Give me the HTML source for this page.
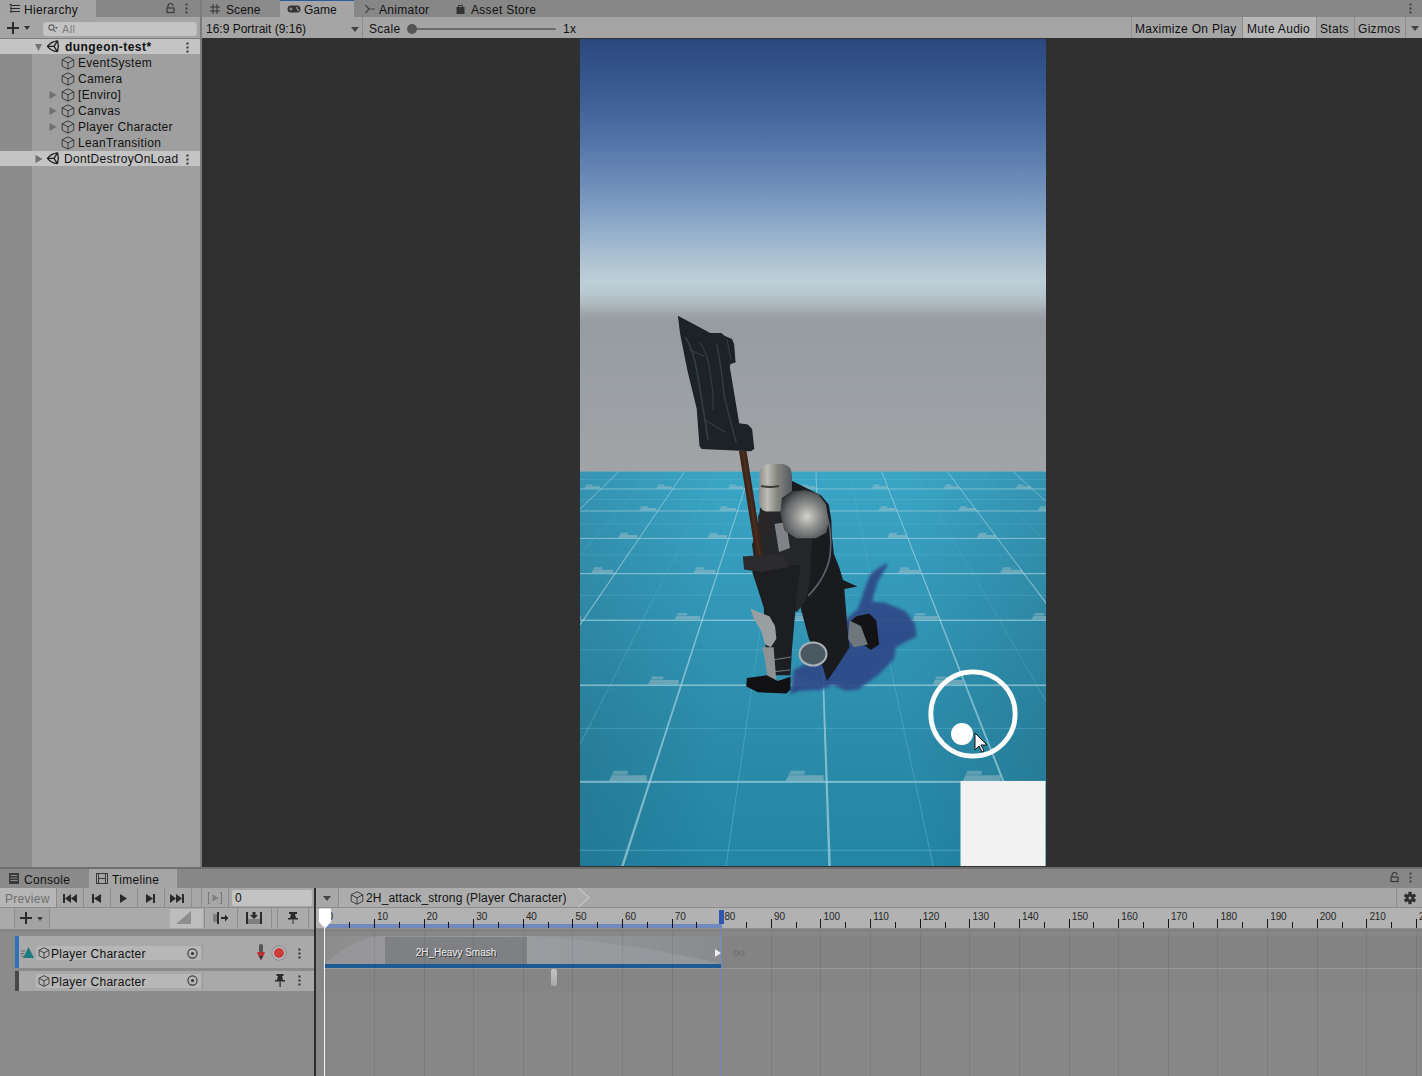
<!DOCTYPE html>
<html><head><meta charset="utf-8">
<style>
*{box-sizing:border-box;margin:0;padding:0}
html,body{width:1422px;height:1076px;overflow:hidden;background:#303030}
body{position:relative;font-family:"Liberation Sans",sans-serif;font-size:12px;color:#111}
.a{position:absolute}
.t{position:absolute;white-space:nowrap;line-height:14px;letter-spacing:0.3px}
svg.a{overflow:visible}
</style></head><body>

<!-- ============ HIERARCHY ============ -->
<div class="a" style="left:0;top:0;width:200px;height:17px;background:#878787"></div>
<div class="a" style="left:0;top:0;width:96px;height:17px;background:#a4a4a4"></div>
<svg class="a" style="left:9px;top:4px" width="11" height="9" viewBox="0 0 11 9"><g stroke="#2a2a2a" stroke-width="1" fill="none"><path d="M0.5 0.5h2M2 0v9M3 1.5h8M3 4.5h8M3 7.5h8M1.5 4.5h1.5M1.5 7.5h1.5"/></g></svg>
<div class="t" style="left:24px;top:3px">Hierarchy</div>
<svg class="a" style="left:166px;top:3px" width="9" height="10" viewBox="0 0 9 10"><g fill="none" stroke="#3a3a3a" stroke-width="1.2"><path d="M2 5V3a2.5 2.5 0 0 1 5 0"/><rect x="1" y="5" width="7" height="4.5"/></g></svg>
<svg class="a" style="left:185px;top:3px" width="3" height="11" viewBox="0 0 3 11"><g fill="#404040"><rect x="0.5" y="0.5" width="2" height="2"/><rect x="0.5" y="4.5" width="2" height="2"/><rect x="0.5" y="8.5" width="2" height="2"/></g></svg>

<div class="a" style="left:0;top:17px;width:200px;height:22px;background:#a5a5a5;border-bottom:1px solid #7e7e7e"></div>
<svg class="a" style="left:7px;top:22px" width="12" height="12" viewBox="0 0 12 12"><path d="M6 0v12M0 6h12" stroke="#2b2b2b" stroke-width="2"/></svg>
<svg class="a" style="left:24px;top:26px" width="6" height="4" viewBox="0 0 6 4"><path d="M0 0h6L3 4z" fill="#333"/></svg>
<div class="a" style="left:43px;top:20.5px;width:154px;height:15px;background:#c4c4c4;border-radius:3px;box-shadow:inset 0 1px 1px rgba(0,0,0,0.18)"></div>
<svg class="a" style="left:48px;top:24px" width="10" height="9" viewBox="0 0 10 9"><g fill="none" stroke="#5a5a5a" stroke-width="1.1"><circle cx="3.5" cy="3.5" r="2.6"/><path d="M5.4 5.4L7.5 8"/></g><path d="M7 3h3L8.5 5z" fill="#5a5a5a"/></svg>
<div class="t" style="left:62px;top:22px;color:#7c7c7c;font-size:11px">All</div>

<div class="a" style="left:0;top:39px;width:200px;height:828px;background:#9f9f9f"></div>
<div class="a" style="left:0;top:39px;width:32px;height:828px;background:#8c8c8c"></div>
<div class="a" style="left:0;top:39px;width:200px;height:15px;background:#c4c4c4"></div>
<div class="a" style="left:0;top:151px;width:200px;height:15px;background:#c4c4c4"></div>

<!-- arrows -->
<svg class="a" style="left:35px;top:44px" width="7" height="7" viewBox="0 0 7 7"><path d="M0 0h7L3.5 7z" fill="#747474"/></svg>
<svg class="a" style="left:35px;top:155px" width="8" height="8" viewBox="0 0 8 8"><path d="M0.5 0v8L7.5 4z" fill="#6e6e6e"/></svg>
<svg class="a" style="left:49px;top:91px" width="8" height="8" viewBox="0 0 8 8"><path d="M0.5 0v8L7.5 4z" fill="#6e6e6e"/></svg>
<svg class="a" style="left:49px;top:107px" width="8" height="8" viewBox="0 0 8 8"><path d="M0.5 0v8L7.5 4z" fill="#6e6e6e"/></svg>
<svg class="a" style="left:49px;top:123px" width="8" height="8" viewBox="0 0 8 8"><path d="M0.5 0v8L7.5 4z" fill="#6e6e6e"/></svg>

<!-- unity icons -->
<svg class="a" style="left:46px;top:39px" width="13" height="13" viewBox="0 0 13 13"><g fill="none" stroke="#1e1e1e" stroke-width="1.3" stroke-linejoin="round"><path d="M1.5 7.3Q5 2.6 11.5 1.8Q13.3 7.2 11.5 12.6Q5 12 1.5 7.3Z"/><path d="M8 7.3H1.5M8 7.3L11.5 1.8M8 7.3L11.5 12.6"/></g></svg>
<svg class="a" style="left:46px;top:151px" width="13" height="13" viewBox="0 0 13 13"><g fill="none" stroke="#1e1e1e" stroke-width="1.3" stroke-linejoin="round"><path d="M1.5 7.3Q5 2.6 11.5 1.8Q13.3 7.2 11.5 12.6Q5 12 1.5 7.3Z"/><path d="M8 7.3H1.5M8 7.3L11.5 1.8M8 7.3L11.5 12.6"/></g></svg>
<!-- cube icons -->
<svg class="a" style="left:61px;top:56px" width="14" height="14" viewBox="0 0 14 14"><g fill="none" stroke="#3c3c3c" stroke-width="1"><path d="M7 0.8L12.8 3.8V10.2L7 13.2L1.2 10.2V3.8Z"/><path d="M1.2 3.8L7 6.8L12.8 3.8M7 6.8V13.2"/></g></svg>
<svg class="a" style="left:61px;top:72px" width="14" height="14" viewBox="0 0 14 14"><g fill="none" stroke="#3c3c3c" stroke-width="1"><path d="M7 0.8L12.8 3.8V10.2L7 13.2L1.2 10.2V3.8Z"/><path d="M1.2 3.8L7 6.8L12.8 3.8M7 6.8V13.2"/></g></svg>
<svg class="a" style="left:61px;top:88px" width="14" height="14" viewBox="0 0 14 14"><g fill="none" stroke="#3c3c3c" stroke-width="1"><path d="M7 0.8L12.8 3.8V10.2L7 13.2L1.2 10.2V3.8Z"/><path d="M1.2 3.8L7 6.8L12.8 3.8M7 6.8V13.2"/></g></svg>
<svg class="a" style="left:61px;top:104px" width="14" height="14" viewBox="0 0 14 14"><g fill="none" stroke="#3c3c3c" stroke-width="1"><path d="M7 0.8L12.8 3.8V10.2L7 13.2L1.2 10.2V3.8Z"/><path d="M1.2 3.8L7 6.8L12.8 3.8M7 6.8V13.2"/></g></svg>
<svg class="a" style="left:61px;top:120px" width="14" height="14" viewBox="0 0 14 14"><g fill="none" stroke="#3c3c3c" stroke-width="1"><path d="M7 0.8L12.8 3.8V10.2L7 13.2L1.2 10.2V3.8Z"/><path d="M1.2 3.8L7 6.8L12.8 3.8M7 6.8V13.2"/></g></svg>
<svg class="a" style="left:61px;top:136px" width="14" height="14" viewBox="0 0 14 14"><g fill="none" stroke="#3c3c3c" stroke-width="1"><path d="M7 0.8L12.8 3.8V10.2L7 13.2L1.2 10.2V3.8Z"/><path d="M1.2 3.8L7 6.8L12.8 3.8M7 6.8V13.2"/></g></svg>

<div class="t" style="left:65px;top:40px;font-weight:bold;letter-spacing:0.45px">dungeon-test*</div>
<div class="t" style="left:78px;top:56px">EventSystem</div>
<div class="t" style="left:78px;top:72px">Camera</div>
<div class="t" style="left:78px;top:88px">[Enviro]</div>
<div class="t" style="left:78px;top:104px">Canvas</div>
<div class="t" style="left:78px;top:120px">Player Character</div>
<div class="t" style="left:78px;top:136px">LeanTransition</div>
<div class="t" style="left:64px;top:152px">DontDestroyOnLoad</div>
<svg class="a" style="left:186px;top:42px" width="3" height="11" viewBox="0 0 3 11"><g fill="#333"><rect x="0.5" y="0.5" width="2" height="2"/><rect x="0.5" y="4.5" width="2" height="2"/><rect x="0.5" y="8.5" width="2" height="2"/></g></svg>
<svg class="a" style="left:186px;top:154px" width="3" height="11" viewBox="0 0 3 11"><g fill="#333"><rect x="0.5" y="0.5" width="2" height="2"/><rect x="0.5" y="4.5" width="2" height="2"/><rect x="0.5" y="8.5" width="2" height="2"/></g></svg>

<div class="a" style="left:200px;top:0;width:2px;height:867px;background:#7c7c7c"></div>

<!-- ============ GAME PANEL ============ -->
<div class="a" style="left:202px;top:0;width:1220px;height:17px;background:#878787"></div>
<div class="a" style="left:202px;top:0;width:78px;height:17px;background:#8b8b8b"></div>
<div class="a" style="left:280px;top:0;width:74px;height:17px;background:#a5a5a5"></div>
<div class="a" style="left:280px;top:0;width:74px;height:1.3px;background:#2e5c9a"></div>
<svg class="a" style="left:210px;top:4px" width="10" height="10" viewBox="0 0 10 10"><path d="M3 0v10M7 0v10M0 3h10M0 7h10" stroke="#333" stroke-width="1"/></svg>
<div class="t" style="left:226px;top:3px;letter-spacing:0.1px">Scene</div>
<svg class="a" style="left:287px;top:5px" width="14" height="8" viewBox="0 0 14 8"><rect x="0.5" y="0.5" width="13" height="7" rx="3.5" fill="#333"/><path d="M2.5 4h3M4 2.5v3" stroke="#a5a5a5" stroke-width="1"/><circle cx="10" cy="3" r="0.9" fill="#a5a5a5"/><circle cx="11" cy="5" r="0.9" fill="#a5a5a5"/></svg>
<div class="t" style="left:304px;top:3px;letter-spacing:0">Game</div>
<svg class="a" style="left:365px;top:4px" width="10" height="10" viewBox="0 0 10 10"><path d="M0.5 1L4 5L0.5 9M4 5H10" stroke="#444" stroke-width="1.2" fill="none"/></svg>
<div class="t" style="left:379px;top:3px">Animator</div>
<svg class="a" style="left:456px;top:4px" width="9" height="10" viewBox="0 0 9 10"><path d="M2.5 3V1.5h4V3" stroke="#333" fill="none"/><rect x="0.5" y="3" width="8" height="7" fill="#333"/></svg>
<div class="t" style="left:471px;top:3px">Asset Store</div>
<svg class="a" style="left:1409px;top:3px" width="3" height="11" viewBox="0 0 3 11"><g fill="#404040"><rect x="0.5" y="0.5" width="2" height="2"/><rect x="0.5" y="4.5" width="2" height="2"/><rect x="0.5" y="8.5" width="2" height="2"/></g></svg>

<div class="a" style="left:202px;top:17px;width:1220px;height:21px;background:#a5a5a5"></div>
<div class="t" style="left:206px;top:22px;letter-spacing:0">16:9 Portrait (9:16)</div>
<svg class="a" style="left:351px;top:27px" width="8" height="5" viewBox="0 0 8 5"><path d="M0 0h8L4 5z" fill="#444"/></svg>
<div class="a" style="left:362px;top:17px;width:1px;height:21px;background:#8e8e8e"></div>
<div class="t" style="left:369px;top:22px">Scale</div>
<div class="a" style="left:412px;top:28px;width:144px;height:2px;background:#6a6a6a;border-radius:1px"></div>
<div class="a" style="left:407px;top:24px;width:10px;height:10px;background:#555;border-radius:50%"></div>
<div class="t" style="left:563px;top:22px">1x</div>
<div class="a" style="left:1131px;top:17px;width:1px;height:21px;background:#8e8e8e"></div>
<div class="a" style="left:1242px;top:17px;width:74px;height:21px;background:#b7b7b7"></div>
<div class="a" style="left:1242px;top:17px;width:1px;height:21px;background:#8e8e8e"></div>
<div class="a" style="left:1316px;top:17px;width:1px;height:21px;background:#8e8e8e"></div>
<div class="a" style="left:1354px;top:17px;width:1px;height:21px;background:#8e8e8e"></div>
<div class="a" style="left:1405px;top:17px;width:1px;height:21px;background:#8e8e8e"></div>
<div class="t" style="left:1135px;top:22px">Maximize On Play</div>
<div class="t" style="left:1247px;top:22px">Mute Audio</div>
<div class="t" style="left:1320px;top:22px">Stats</div>
<div class="t" style="left:1358px;top:22px">Gizmos</div>
<svg class="a" style="left:1411px;top:26px" width="8" height="5" viewBox="0 0 8 5"><path d="M0 0h8L4 5z" fill="#444"/></svg>
<div class="a" style="left:202px;top:38px;width:1220px;height:829px;background:#303030"></div>

<svg class="a" style="left:580px;top:39px" width="466" height="827" viewBox="580 39 466 827">
<defs>
<linearGradient id="sky" x1="0" y1="0" x2="0" y2="1" gradientUnits="objectBoundingBox">
<stop offset="0" stop-color="#2b487e"/>
<stop offset="0.15" stop-color="#36578f"/>
<stop offset="0.36" stop-color="#5273a8"/>
<stop offset="0.59" stop-color="#7c9cc2"/>
<stop offset="0.75" stop-color="#a5bcd0"/>
<stop offset="0.80" stop-color="#b2c5d2"/>
<stop offset="0.855" stop-color="#bccfd7"/>
<stop offset="0.90" stop-color="#b9c9d0"/>
<stop offset="0.94" stop-color="#adb8bd"/>
<stop offset="0.975" stop-color="#9ea5aa"/>
<stop offset="1" stop-color="#979ca1"/>
</linearGradient>
<linearGradient id="gnd" x1="0" y1="0" x2="0" y2="1">
<stop offset="0" stop-color="#979ca1"/>
<stop offset="1" stop-color="#a0a4a7"/>
</linearGradient>
<linearGradient id="flr" x1="0" y1="0" x2="0" y2="1">
<stop offset="0" stop-color="#3ba5c6"/>
<stop offset="0.35" stop-color="#3397b7"/>
<stop offset="0.7" stop-color="#2b8ba9"/>
<stop offset="1" stop-color="#2486a6"/>
</linearGradient>
<linearGradient id="flrx" x1="0" y1="0" x2="1" y2="0">
<stop offset="0" stop-color="#000" stop-opacity="0.10"/>
<stop offset="0.3" stop-color="#000" stop-opacity="0"/>
<stop offset="0.7" stop-color="#000" stop-opacity="0"/>
<stop offset="1" stop-color="#000" stop-opacity="0.10"/>
</linearGradient>
<linearGradient id="helm" x1="0" y1="0" x2="1" y2="0">
<stop offset="0" stop-color="#8e8e88"/>
<stop offset="0.25" stop-color="#bdbdb5"/>
<stop offset="0.55" stop-color="#85867f"/>
<stop offset="1" stop-color="#545a62"/>
</linearGradient>
<radialGradient id="paul" cx="0.55" cy="0.55" r="0.62">
<stop offset="0" stop-color="#d4d4cc"/>
<stop offset="0.35" stop-color="#9a9b98"/>
<stop offset="0.75" stop-color="#5e6264"/>
<stop offset="1" stop-color="#2e3134"/>
</radialGradient>
<clipPath id="fc"><rect x="580" y="471.5" width="466" height="395"/></clipPath>
<filter id="blur05" x="-20%" y="-20%" width="140%" height="140%"><feGaussianBlur stdDeviation="0.7"/></filter>
<filter id="blur1" x="-10%" y="-10%" width="120%" height="120%"><feGaussianBlur stdDeviation="1.5"/></filter>
</defs>
<rect x="580" y="39" width="466" height="282" fill="url(#sky)"/>
<rect x="580" y="320" width="466" height="152" fill="url(#gnd)"/>
<rect x="580" y="471.5" width="466" height="394.5" fill="url(#flr)"/>
<rect x="580" y="471.5" width="466" height="394.5" fill="url(#flrx)"/>
<g clip-path="url(#fc)">
<rect x="580" y="470.46" width="466" height="0.90" fill="#b4dce6" fill-opacity="0.6"/>
<rect x="580" y="479.21" width="466" height="0.60" fill="#6cbcd6" fill-opacity="0.45"/>
<rect x="580" y="488.51" width="466" height="0.90" fill="#b4dce6" fill-opacity="0.6"/>
<rect x="580" y="499.10" width="466" height="0.60" fill="#6cbcd6" fill-opacity="0.45"/>
<rect x="580" y="510.51" width="466" height="0.93" fill="#b4dce6" fill-opacity="0.6"/>
<rect x="580" y="523.60" width="466" height="0.60" fill="#6cbcd6" fill-opacity="0.45"/>
<rect x="580" y="537.90" width="466" height="1.04" fill="#b4dce6" fill-opacity="0.6"/>
<rect x="580" y="554.55" width="466" height="0.60" fill="#6cbcd6" fill-opacity="0.45"/>
<rect x="580" y="572.99" width="466" height="1.19" fill="#b4dce6" fill-opacity="0.6"/>
<rect x="580" y="594.86" width="466" height="0.61" fill="#6cbcd6" fill-opacity="0.45"/>
<rect x="580" y="619.58" width="466" height="1.38" fill="#b4dce6" fill-opacity="0.6"/>
<rect x="580" y="649.50" width="466" height="0.72" fill="#6cbcd6" fill-opacity="0.45"/>
<rect x="580" y="684.42" width="466" height="1.65" fill="#b4dce6" fill-opacity="0.6"/>
<rect x="580" y="727.87" width="466" height="0.88" fill="#6cbcd6" fill-opacity="0.45"/>
<rect x="580" y="780.83" width="466" height="2.06" fill="#b4dce6" fill-opacity="0.6"/>
<rect x="580" y="849.70" width="466" height="1.12" fill="#6cbcd6" fill-opacity="0.45"/>
<path d="M423.90,470.5 L424.71,470.5 L-415.91,868 L-418.49,868 Z" fill="#b4dce6" fill-opacity="0.62"/>
<path d="M456.77,470.5 L457.10,470.5 L-312.77,868 L-313.82,868 Z" fill="#6cbcd6" fill-opacity="0.5"/>
<path d="M489.17,470.5 L489.98,470.5 L-208.11,868 L-210.68,868 Z" fill="#b4dce6" fill-opacity="0.62"/>
<path d="M522.04,470.5 L522.37,470.5 L-104.96,868 L-106.02,868 Z" fill="#6cbcd6" fill-opacity="0.5"/>
<path d="M554.43,470.5 L555.24,470.5 L-0.30,868 L-2.87,868 Z" fill="#b4dce6" fill-opacity="0.62"/>
<path d="M587.30,470.5 L587.63,470.5 L102.85,868 L101.79,868 Z" fill="#6cbcd6" fill-opacity="0.5"/>
<path d="M619.70,470.5 L620.51,470.5 L207.51,868 L204.94,868 Z" fill="#b4dce6" fill-opacity="0.62"/>
<path d="M652.57,470.5 L652.90,470.5 L310.66,868 L309.60,868 Z" fill="#6cbcd6" fill-opacity="0.5"/>
<path d="M684.96,470.5 L685.77,470.5 L415.32,868 L412.75,868 Z" fill="#b4dce6" fill-opacity="0.62"/>
<path d="M717.83,470.5 L718.16,470.5 L518.46,868 L517.41,868 Z" fill="#6cbcd6" fill-opacity="0.5"/>
<path d="M750.23,470.5 L751.04,470.5 L623.13,868 L620.55,868 Z" fill="#b4dce6" fill-opacity="0.62"/>
<path d="M783.10,470.5 L783.43,470.5 L726.27,868 L725.22,868 Z" fill="#6cbcd6" fill-opacity="0.5"/>
<path d="M815.49,470.5 L816.30,470.5 L830.94,868 L828.36,868 Z" fill="#b4dce6" fill-opacity="0.62"/>
<path d="M848.36,470.5 L848.70,470.5 L934.08,868 L933.03,868 Z" fill="#6cbcd6" fill-opacity="0.5"/>
<path d="M880.76,470.5 L881.57,470.5 L1038.75,868 L1036.17,868 Z" fill="#b4dce6" fill-opacity="0.62"/>
<path d="M913.63,470.5 L913.96,470.5 L1141.89,868 L1140.84,868 Z" fill="#6cbcd6" fill-opacity="0.5"/>
<path d="M946.02,470.5 L946.83,470.5 L1246.56,868 L1243.98,868 Z" fill="#b4dce6" fill-opacity="0.62"/>
<path d="M978.89,470.5 L979.23,470.5 L1349.70,868 L1348.65,868 Z" fill="#6cbcd6" fill-opacity="0.5"/>
<path d="M1011.29,470.5 L1012.10,470.5 L1454.36,868 L1451.79,868 Z" fill="#b4dce6" fill-opacity="0.62"/>
<path d="M1044.16,470.5 L1044.49,470.5 L1557.51,868 L1556.45,868 Z" fill="#6cbcd6" fill-opacity="0.5"/>
<path d="M1076.55,470.5 L1077.36,470.5 L1662.17,868 L1659.60,868 Z" fill="#b4dce6" fill-opacity="0.62"/>
<path d="M1109.43,470.5 L1109.76,470.5 L1765.32,868 L1764.26,868 Z" fill="#6cbcd6" fill-opacity="0.5"/>
<path d="M1141.82,470.5 L1142.63,470.5 L1869.98,868 L1867.41,868 Z" fill="#b4dce6" fill-opacity="0.62"/>
<path d="M1174.69,470.5 L1175.02,470.5 L1973.13,868 L1972.07,868 Z" fill="#6cbcd6" fill-opacity="0.5"/>
<path d="M1207.08,470.5 L1207.89,470.5 L2077.79,868 L2075.22,868 Z" fill="#b4dce6" fill-opacity="0.62"/>
<path d="M1239.96,470.5 L1240.29,470.5 L2180.93,868 L2179.88,868 Z" fill="#6cbcd6" fill-opacity="0.5"/>
<path d="M606.3,466.8 L611.5,466.8 L611.5,468.3 L605.6,468.3 Z" fill="#b4c8ce" fill-opacity="0.4"/>
<path d="M605.6,468.5 L618.6,468.5 L618.6,470.5 L604.5,470.5 Z" fill="#b4c8ce" fill-opacity="0.45"/>
<path d="M671.8,466.8 L676.9,466.8 L676.9,468.3 L671.0,468.3 Z" fill="#b4c8ce" fill-opacity="0.4"/>
<path d="M671.0,468.5 L684.0,468.5 L684.0,470.5 L669.9,470.5 Z" fill="#b4c8ce" fill-opacity="0.45"/>
<path d="M737.2,466.8 L742.3,466.8 L742.3,468.3 L736.4,468.3 Z" fill="#b4c8ce" fill-opacity="0.4"/>
<path d="M736.4,468.5 L749.4,468.5 L749.4,470.5 L735.3,470.5 Z" fill="#b4c8ce" fill-opacity="0.45"/>
<path d="M802.6,466.8 L807.8,466.8 L807.8,468.3 L801.8,468.3 Z" fill="#b4c8ce" fill-opacity="0.4"/>
<path d="M801.8,468.5 L814.8,468.5 L814.8,470.5 L800.7,470.5 Z" fill="#b4c8ce" fill-opacity="0.45"/>
<path d="M868.0,466.8 L873.2,466.8 L873.2,468.3 L867.3,468.3 Z" fill="#b4c8ce" fill-opacity="0.4"/>
<path d="M867.3,468.5 L880.2,468.5 L880.2,470.5 L866.1,470.5 Z" fill="#b4c8ce" fill-opacity="0.45"/>
<path d="M933.4,466.8 L938.6,466.8 L938.6,468.3 L932.7,468.3 Z" fill="#b4c8ce" fill-opacity="0.4"/>
<path d="M932.7,468.5 L945.6,468.5 L945.6,470.5 L931.6,470.5 Z" fill="#b4c8ce" fill-opacity="0.45"/>
<path d="M998.8,466.8 L1004.0,466.8 L1004.0,468.3 L998.1,468.3 Z" fill="#b4c8ce" fill-opacity="0.4"/>
<path d="M998.1,468.5 L1011.0,468.5 L1011.0,470.5 L997.0,470.5 Z" fill="#b4c8ce" fill-opacity="0.45"/>
<path d="M1064.2,466.8 L1069.4,466.8 L1069.4,468.3 L1063.5,468.3 Z" fill="#b4c8ce" fill-opacity="0.4"/>
<path d="M1063.5,468.5 L1076.5,468.5 L1076.5,470.5 L1062.4,470.5 Z" fill="#b4c8ce" fill-opacity="0.45"/>
<path d="M586.2,484.5 L591.9,484.5 L591.9,486.1 L585.4,486.1 Z" fill="#b4c8ce" fill-opacity="0.4"/>
<path d="M585.4,486.3 L599.7,486.3 L599.7,488.6 L584.2,488.6 Z" fill="#b4c8ce" fill-opacity="0.45"/>
<path d="M658.1,484.5 L663.8,484.5 L663.8,486.1 L657.3,486.1 Z" fill="#b4c8ce" fill-opacity="0.4"/>
<path d="M657.3,486.3 L671.5,486.3 L671.5,488.6 L656.1,488.6 Z" fill="#b4c8ce" fill-opacity="0.45"/>
<path d="M730.0,484.5 L735.7,484.5 L735.7,486.1 L729.2,486.1 Z" fill="#b4c8ce" fill-opacity="0.4"/>
<path d="M729.2,486.3 L743.4,486.3 L743.4,488.6 L728.0,488.6 Z" fill="#b4c8ce" fill-opacity="0.45"/>
<path d="M801.9,484.5 L807.6,484.5 L807.6,486.1 L801.1,486.1 Z" fill="#b4c8ce" fill-opacity="0.4"/>
<path d="M801.1,486.3 L815.3,486.3 L815.3,488.6 L799.8,488.6 Z" fill="#b4c8ce" fill-opacity="0.45"/>
<path d="M873.8,484.5 L879.5,484.5 L879.5,486.1 L873.0,486.1 Z" fill="#b4c8ce" fill-opacity="0.4"/>
<path d="M873.0,486.3 L887.2,486.3 L887.2,488.6 L871.7,488.6 Z" fill="#b4c8ce" fill-opacity="0.45"/>
<path d="M945.7,484.5 L951.4,484.5 L951.4,486.1 L944.8,486.1 Z" fill="#b4c8ce" fill-opacity="0.4"/>
<path d="M944.8,486.3 L959.1,486.3 L959.1,488.6 L943.6,488.6 Z" fill="#b4c8ce" fill-opacity="0.45"/>
<path d="M1017.5,484.5 L1023.2,484.5 L1023.2,486.1 L1016.7,486.1 Z" fill="#b4c8ce" fill-opacity="0.4"/>
<path d="M1016.7,486.3 L1031.0,486.3 L1031.0,488.6 L1015.5,488.6 Z" fill="#b4c8ce" fill-opacity="0.45"/>
<path d="M561.7,506.0 L568.0,506.0 L568.0,507.8 L560.8,507.8 Z" fill="#b4c8ce" fill-opacity="0.4"/>
<path d="M560.8,508.0 L576.6,508.0 L576.6,510.5 L559.4,510.5 Z" fill="#b4c8ce" fill-opacity="0.45"/>
<path d="M641.5,506.0 L647.8,506.0 L647.8,507.8 L640.6,507.8 Z" fill="#b4c8ce" fill-opacity="0.4"/>
<path d="M640.6,508.0 L656.4,508.0 L656.4,510.5 L639.2,510.5 Z" fill="#b4c8ce" fill-opacity="0.45"/>
<path d="M721.3,506.0 L727.6,506.0 L727.6,507.8 L720.4,507.8 Z" fill="#b4c8ce" fill-opacity="0.4"/>
<path d="M720.4,508.0 L736.2,508.0 L736.2,510.5 L719.0,510.5 Z" fill="#b4c8ce" fill-opacity="0.45"/>
<path d="M801.0,506.0 L807.4,506.0 L807.4,507.8 L800.1,507.8 Z" fill="#b4c8ce" fill-opacity="0.4"/>
<path d="M800.1,508.0 L815.9,508.0 L815.9,510.5 L798.8,510.5 Z" fill="#b4c8ce" fill-opacity="0.45"/>
<path d="M880.8,506.0 L887.1,506.0 L887.1,507.8 L879.9,507.8 Z" fill="#b4c8ce" fill-opacity="0.4"/>
<path d="M879.9,508.0 L895.7,508.0 L895.7,510.5 L878.6,510.5 Z" fill="#b4c8ce" fill-opacity="0.45"/>
<path d="M960.6,506.0 L966.9,506.0 L966.9,507.8 L959.7,507.8 Z" fill="#b4c8ce" fill-opacity="0.4"/>
<path d="M959.7,508.0 L975.5,508.0 L975.5,510.5 L958.3,510.5 Z" fill="#b4c8ce" fill-opacity="0.45"/>
<path d="M1040.4,506.0 L1046.7,506.0 L1046.7,507.8 L1039.5,507.8 Z" fill="#b4c8ce" fill-opacity="0.4"/>
<path d="M1039.5,508.0 L1055.3,508.0 L1055.3,510.5 L1038.1,510.5 Z" fill="#b4c8ce" fill-opacity="0.45"/>
<path d="M620.7,532.8 L627.8,532.8 L627.8,534.9 L619.7,534.9 Z" fill="#b4c8ce" fill-opacity="0.4"/>
<path d="M619.7,535.1 L637.5,535.1 L637.5,537.9 L618.2,537.9 Z" fill="#b4c8ce" fill-opacity="0.45"/>
<path d="M710.4,532.8 L717.5,532.8 L717.5,534.9 L709.3,534.9 Z" fill="#b4c8ce" fill-opacity="0.4"/>
<path d="M709.3,535.1 L727.1,535.1 L727.1,537.9 L707.8,537.9 Z" fill="#b4c8ce" fill-opacity="0.45"/>
<path d="M800.0,532.8 L807.1,532.8 L807.1,534.9 L799.0,534.9 Z" fill="#b4c8ce" fill-opacity="0.4"/>
<path d="M799.0,535.1 L816.7,535.1 L816.7,537.9 L797.4,537.9 Z" fill="#b4c8ce" fill-opacity="0.45"/>
<path d="M889.6,532.8 L896.7,532.8 L896.7,534.9 L888.6,534.9 Z" fill="#b4c8ce" fill-opacity="0.4"/>
<path d="M888.6,535.1 L906.3,535.1 L906.3,537.9 L887.1,537.9 Z" fill="#b4c8ce" fill-opacity="0.45"/>
<path d="M979.2,532.8 L986.3,532.8 L986.3,534.9 L978.2,534.9 Z" fill="#b4c8ce" fill-opacity="0.4"/>
<path d="M978.2,535.1 L996.0,535.1 L996.0,537.9 L976.7,537.9 Z" fill="#b4c8ce" fill-opacity="0.45"/>
<path d="M1068.8,532.8 L1075.9,532.8 L1075.9,534.9 L1067.8,534.9 Z" fill="#b4c8ce" fill-opacity="0.4"/>
<path d="M1067.8,535.1 L1085.6,535.1 L1085.6,537.9 L1066.3,537.9 Z" fill="#b4c8ce" fill-opacity="0.45"/>
<path d="M594.2,567.2 L602.3,567.2 L602.3,569.5 L593.0,569.5 Z" fill="#b4c8ce" fill-opacity="0.4"/>
<path d="M593.0,569.8 L613.3,569.8 L613.3,573.0 L591.3,573.0 Z" fill="#b4c8ce" fill-opacity="0.45"/>
<path d="M696.4,567.2 L704.5,567.2 L704.5,569.5 L695.2,569.5 Z" fill="#b4c8ce" fill-opacity="0.4"/>
<path d="M695.2,569.8 L715.5,569.8 L715.5,573.0 L693.5,573.0 Z" fill="#b4c8ce" fill-opacity="0.45"/>
<path d="M798.6,567.2 L806.7,567.2 L806.7,569.5 L797.5,569.5 Z" fill="#b4c8ce" fill-opacity="0.4"/>
<path d="M797.5,569.8 L817.7,569.8 L817.7,573.0 L795.7,573.0 Z" fill="#b4c8ce" fill-opacity="0.45"/>
<path d="M900.9,567.2 L909.0,567.2 L909.0,569.5 L899.7,569.5 Z" fill="#b4c8ce" fill-opacity="0.4"/>
<path d="M899.7,569.8 L920.0,569.8 L920.0,573.0 L898.0,573.0 Z" fill="#b4c8ce" fill-opacity="0.45"/>
<path d="M1003.1,567.2 L1011.2,567.2 L1011.2,569.5 L1001.9,569.5 Z" fill="#b4c8ce" fill-opacity="0.4"/>
<path d="M1001.9,569.8 L1022.2,569.8 L1022.2,573.0 L1000.2,573.0 Z" fill="#b4c8ce" fill-opacity="0.45"/>
<path d="M558.9,612.9 L568.3,612.9 L568.3,615.6 L557.5,615.6 Z" fill="#b4c8ce" fill-opacity="0.4"/>
<path d="M557.5,615.9 L581.1,615.9 L581.1,619.6 L555.5,619.6 Z" fill="#b4c8ce" fill-opacity="0.45"/>
<path d="M677.9,612.9 L687.3,612.9 L687.3,615.6 L676.5,615.6 Z" fill="#b4c8ce" fill-opacity="0.4"/>
<path d="M676.5,615.9 L700.1,615.9 L700.1,619.6 L674.5,619.6 Z" fill="#b4c8ce" fill-opacity="0.45"/>
<path d="M796.8,612.9 L806.3,612.9 L806.3,615.6 L795.5,615.6 Z" fill="#b4c8ce" fill-opacity="0.4"/>
<path d="M795.5,615.9 L819.1,615.9 L819.1,619.6 L793.5,619.6 Z" fill="#b4c8ce" fill-opacity="0.45"/>
<path d="M915.8,612.9 L925.2,612.9 L925.2,615.6 L914.5,615.6 Z" fill="#b4c8ce" fill-opacity="0.4"/>
<path d="M914.5,615.9 L938.0,615.9 L938.0,619.6 L912.4,619.6 Z" fill="#b4c8ce" fill-opacity="0.45"/>
<path d="M1034.8,612.9 L1044.2,612.9 L1044.2,615.6 L1033.4,615.6 Z" fill="#b4c8ce" fill-opacity="0.4"/>
<path d="M1033.4,615.9 L1057.0,615.9 L1057.0,619.6 L1031.4,619.6 Z" fill="#b4c8ce" fill-opacity="0.45"/>
<path d="M652.1,676.4 L663.3,676.4 L663.3,679.6 L650.4,679.6 Z" fill="#b4c8ce" fill-opacity="0.4"/>
<path d="M650.4,680.0 L678.6,680.0 L678.6,684.4 L648.0,684.4 Z" fill="#b4c8ce" fill-opacity="0.45"/>
<path d="M794.3,676.4 L805.6,676.4 L805.6,679.6 L792.7,679.6 Z" fill="#b4c8ce" fill-opacity="0.4"/>
<path d="M792.7,680.0 L820.9,680.0 L820.9,684.4 L790.3,684.4 Z" fill="#b4c8ce" fill-opacity="0.45"/>
<path d="M936.6,676.4 L947.9,676.4 L947.9,679.6 L935.0,679.6 Z" fill="#b4c8ce" fill-opacity="0.4"/>
<path d="M935.0,680.0 L963.2,680.0 L963.2,684.4 L932.6,684.4 Z" fill="#b4c8ce" fill-opacity="0.45"/>
<path d="M613.7,770.8 L627.7,770.8 L627.7,774.8 L611.7,774.8 Z" fill="#b4c8ce" fill-opacity="0.4"/>
<path d="M611.7,775.3 L646.7,775.3 L646.7,780.9 L608.7,780.9 Z" fill="#b4c8ce" fill-opacity="0.45"/>
<path d="M790.6,770.8 L804.6,770.8 L804.6,774.8 L788.6,774.8 Z" fill="#b4c8ce" fill-opacity="0.4"/>
<path d="M788.6,775.3 L823.7,775.3 L823.7,780.9 L785.6,780.9 Z" fill="#b4c8ce" fill-opacity="0.45"/>
<path d="M967.5,770.8 L981.6,770.8 L981.6,774.8 L965.5,774.8 Z" fill="#b4c8ce" fill-opacity="0.4"/>
<path d="M965.5,775.3 L1000.6,775.3 L1000.6,780.9 L962.5,780.9 Z" fill="#b4c8ce" fill-opacity="0.45"/>
</g>
<g filter="url(#blur1)" fill="#2f4a88" opacity="0.92"><path d="M886,563.2 L887.5,565.3 L877.6,582 L872,601.6 L886,603 L905.5,611.3 L915.2,623.9 L916.6,636.4 L905.5,642 L895.7,647.6 L894.3,658.7 L877.6,675.5 L858,689.4 L845.5,690.8 L833,685.2 L822,689.4 L800,691 L790,694 L794,670 L822,655 L840,625 L858,608.6 L863.6,591.8 L870.6,573.7 Z"/></g>
<path d="M677.9,315.8 L710.3,333.1 L721.2,333.1 L724.8,336 L732,338.9 L734.1,343.9 L735.6,362.6 L730.5,364.1 L729.8,367 L739.2,423.2 L747.8,424.6 L752.1,428.9 L754.3,449.1 L750.7,451.3 L701.7,449.1 L699.5,446.3 L696.7,408.7 L687.3,370 L680.1,333.8 Z" fill="#1c2226"/>
<g fill="none" stroke="#38454e" stroke-linecap="round" opacity="0.8" filter="url(#blur05)"><path d="M686,338 Q694,352 697,372 Q702,400 708,440" stroke-width="1.6"/><path d="M700,342 Q708,355 710,372 Q714,395 713,410" stroke-width="1.2"/><path d="M717,345 Q722,370 724,395 Q730,420 736,442" stroke-width="1.4"/><path d="M690,350 L704,356" stroke-width="1.2"/><path d="M705,420 L725,432" stroke-width="1.2"/><path d="M727,340 L731,360" stroke-width="1"/></g>
<path d="M792.2,481 L807.9,488.8 L820.9,495.3 L828.7,504.4 L831.3,520 L831.9,535.7 L833.9,553.9 L839.1,566.9 L843,580 L857.3,586.4 L844.3,589 L847.4,627.5 L849.5,647.2 L836.9,666.9 L827,681 L822.8,666.9 L808.8,638.8 L801,609.2 L797,590 L790,560 L780,530 L785,500 Z" fill="#1a1b1f"/>
<path d="M818,498 Q834,520 830,556 Q826,578 808,596" fill="none" stroke="#5c636b" stroke-width="1.6"/>
<path d="M760,508 L792,500 L812,540 L810,580 L806,600 L797,612 L770,600 L756,572 L752,545 L758,525 Z" fill="#24262a"/>
<path d="M752.5,565 L800.3,565 L796.1,602.2 L791.9,650 L790.5,675.3 L772.2,675.3 L765.2,644.4 L763.8,607.8 L752.5,572.7 Z" fill="#1d1e21"/>
<path d="M856.6,616.3 L869.2,613.4 L876.3,620.5 L879.1,644.4 L870.6,650 L863.6,644.4 L852.4,638.8 L849.5,621.9 Z" fill="#131315"/>
<path d="M849.5,620.5 L860.8,626.1 L867.8,644.4 L853.8,647.2 L848.1,638.8 Z" fill="#6f777c"/>
<ellipse cx="813" cy="654" rx="13.5" ry="11.5" fill="#4a5862" stroke="#aab3b8" stroke-width="2"/>
<path d="M750.4,608.5 L758.1,612 L769.4,616.3 L775,626.1 L776.4,638.8 L770.8,647.2 L765.2,644.4 L760.9,630.3 L753.9,619 Z" fill="#9aa0a2"/>
<path d="M762.3,647.2 L773.6,647.2 L776.4,681 L768,681 L765.2,661.3 Z" fill="#8d9395"/>
<path d="M772,660 L791,657 M771,672 L790,670" stroke="#8a9094" stroke-width="0.8"/>
<path d="M746.9,678.1 L766.6,675.3 L777.8,681 L790.5,676.7 L790.5,689.4 L786.3,693.6 L758.1,692.2 L746.2,686.6 Z" fill="#111113"/>
<path d="M739,451 L746.5,451 L765.5,570 L758,570 Z" fill="#3d2519"/>
<path d="M742,451 L744,451 L762,565 L760,565 Z" fill="#5e3c2a" opacity="0.45"/>
<path d="M742.8,556.5 L781.8,553.9 L789.6,566.9 L761,572.1 L744.1,569.5 Z" fill="#2b2a2d"/>
<path d="M758,516 Q762,510 770,514 L772,532 Q768,540 760,536 Z" fill="#2a2627"/>
<path d="M774.5,524 L786,522 L790,548 L779,552 Z" fill="#8f9498" opacity="0.85"/>
<path d="M759.5,472 Q760,464.5 770,464 L783,464 Q791.5,465 792,476 L792,498 Q790,510 780,511.5 L766,511.5 Q759,510 759,500 Z" fill="url(#helm)"/>
<path d="M761,486 Q770,488 779,486" stroke="#3c3c3a" stroke-width="1.8" fill="none"/>
<path d="M781.8,498 L791,491.4 L805.3,490.1 L818.3,494 L826.1,504.4 L828.7,522.7 L826.1,533.1 L815.7,538.3 L796.2,538.3 L784.4,530.5 L780.5,513.5 Z" fill="url(#paul)"/>
<circle cx="973" cy="714" r="42.2" fill="none" stroke="#fff" stroke-width="4.8"/>
<circle cx="962" cy="734" r="11" fill="#fff"/>
<path d="M975,733 L975,750 L979,746 L982,752 L984,751 L981,745 L987,745 Z" fill="#fff" stroke="#111" stroke-width="1"/>
<rect x="960.5" y="781" width="85" height="85" fill="#f2f2f2"/>
</svg>

<!-- ============ BOTTOM PANEL ============ -->
<div class="a" style="left:202px;top:866px;width:1220px;height:1.5px;background:#303030"></div>
<div class="a" style="left:0;top:867px;width:1422px;height:2px;background:#6e6e6e"></div>
<div class="a" style="left:0;top:869px;width:1422px;height:19px;background:#878787"></div>
<div class="a" style="left:0;top:869px;width:89px;height:19px;background:#8a8a8a"></div>
<div class="a" style="left:89px;top:869px;width:88px;height:19px;background:#a5a5a5"></div>
<svg class="a" style="left:9px;top:873px" width="10" height="11" viewBox="0 0 10 11"><rect x="0" y="0" width="10" height="11" fill="#3a3a3a"/><path d="M1.5 2.5h7M1.5 5h7M1.5 7.5h7" stroke="#8a8a8a" stroke-width="1"/></svg>
<div class="t" style="left:24px;top:873px">Console</div>
<svg class="a" style="left:96px;top:873px" width="12" height="11" viewBox="0 0 12 11"><g fill="none" stroke="#3a3a3a" stroke-width="1"><rect x="0.5" y="0.5" width="11" height="10"/><path d="M2.5 0.5v10M9.5 0.5v10M2.5 5.5h7"/></g></svg>
<div class="t" style="left:112px;top:873px">Timeline</div>
<svg class="a" style="left:1390px;top:872px" width="9" height="10" viewBox="0 0 9 10"><g fill="none" stroke="#3a3a3a" stroke-width="1.2"><path d="M2 5V3a2.5 2.5 0 0 1 5 0"/><rect x="1" y="5" width="7" height="4.5"/></g></svg>
<svg class="a" style="left:1409px;top:872px" width="3" height="11" viewBox="0 0 3 11"><g fill="#404040"><rect x="0.5" y="0.5" width="2" height="2"/><rect x="0.5" y="4.5" width="2" height="2"/><rect x="0.5" y="8.5" width="2" height="2"/></g></svg>

<!-- toolbar row 1 -->
<div class="a" style="left:0;top:888px;width:1422px;height:20px;background:#a7a7a7;border-bottom:1px solid #8e8e8e"></div>
<div class="a" style="left:0;top:888px;width:56px;height:19px;background:#b6b6b6"></div>
<div class="t" style="left:5px;top:892px;color:#6e6e6e">Preview</div>
<div class="a" style="left:56px;top:888px;width:1px;height:20px;background:#8c8c8c"></div>
<div class="a" style="left:83px;top:888px;width:1px;height:20px;background:#8c8c8c"></div>
<div class="a" style="left:110px;top:888px;width:1px;height:20px;background:#8c8c8c"></div>
<div class="a" style="left:137px;top:888px;width:1px;height:20px;background:#8c8c8c"></div>
<div class="a" style="left:164px;top:888px;width:1px;height:20px;background:#8c8c8c"></div>
<div class="a" style="left:191px;top:888px;width:1px;height:20px;background:#8c8c8c"></div>
<div class="a" style="left:201px;top:888px;width:1px;height:20px;background:#8c8c8c"></div>
<div class="a" style="left:228px;top:888px;width:1px;height:20px;background:#8c8c8c"></div>
<svg class="a" style="left:63px;top:894px" width="14" height="9" viewBox="0 0 14 9"><g fill="#2a2a2a"><rect x="0" y="0" width="2" height="9"/><path d="M8 0v9L2 4.5z"/><path d="M14 0v9L8 4.5z"/></g></svg>
<svg class="a" style="left:92px;top:894px" width="9" height="9" viewBox="0 0 9 9"><g fill="#2a2a2a"><rect x="0" y="0" width="2" height="9"/><path d="M9 0v9L2 4.5z"/></g></svg>
<svg class="a" style="left:120px;top:894px" width="7" height="9" viewBox="0 0 7 9"><path d="M0 0v9L7 4.5z" fill="#2a2a2a"/></svg>
<svg class="a" style="left:146px;top:894px" width="9" height="9" viewBox="0 0 9 9"><g fill="#2a2a2a"><rect x="7" y="0" width="2" height="9"/><path d="M0 0v9L7 4.5z"/></g></svg>
<svg class="a" style="left:170px;top:894px" width="14" height="9" viewBox="0 0 14 9"><g fill="#2a2a2a"><rect x="12" y="0" width="2" height="9"/><path d="M0 0v9L6 4.5z"/><path d="M6 0v9L12 4.5z"/></g></svg>
<svg class="a" style="left:207px;top:892px" width="16" height="12" viewBox="0 0 16 12"><g fill="none" stroke="#777" stroke-width="1"><path d="M3 0.5H1.5V11.5H3M13 0.5H14.5V11.5H13"/></g><path d="M5.5 2.5v7L11.5 6z" fill="#7e7e7e"/></svg>
<div class="a" style="left:232px;top:890px;width:80px;height:16px;background:#c3c3c3;border-radius:2px"></div>
<div class="t" style="left:235px;top:891px">0</div>

<!-- toolbar row 1 right -->
<svg class="a" style="left:323px;top:896px" width="8" height="5" viewBox="0 0 8 5"><path d="M0 0h8L4 5z" fill="#444"/></svg>
<div class="a" style="left:338px;top:888px;width:1px;height:20px;background:#8e8e8e"></div>
<div class="a" style="left:339px;top:888px;width:239px;height:19px;background:#adadad"></div>
<svg class="a" style="left:578px;top:888px" width="14" height="19" viewBox="0 0 14 19"><path d="M0 0L11 9.5L0 19Z" fill="#adadad"/><path d="M0.5 0L11 9.5L0.5 19" fill="none" stroke="#c4c4c4" stroke-width="1.2"/></svg>
<svg class="a" style="left:350px;top:891px" width="14" height="14" viewBox="0 0 14 14"><g fill="none" stroke="#3c3c3c" stroke-width="1"><path d="M7 0.8L12.8 3.8V10.2L7 13.2L1.2 10.2V3.8Z"/><path d="M1.2 3.8L7 6.8L12.8 3.8M7 6.8V13.2"/></g></svg>
<div class="t" style="left:366px;top:891px;letter-spacing:0.15px">2H_attack_strong (Player Character)</div>

<div class="a" style="left:1396px;top:888px;width:1px;height:20px;background:#8e8e8e"></div>
<svg class="a" style="left:1403px;top:891px" width="14" height="14" viewBox="-7 -7 14 14"><g fill="#2e2e2e"><rect x="-1.6" y="-6.2" width="3.2" height="3.4" transform="rotate(0)"/><rect x="-1.6" y="-6.2" width="3.2" height="3.4" transform="rotate(60)"/><rect x="-1.6" y="-6.2" width="3.2" height="3.4" transform="rotate(120)"/><rect x="-1.6" y="-6.2" width="3.2" height="3.4" transform="rotate(180)"/><rect x="-1.6" y="-6.2" width="3.2" height="3.4" transform="rotate(240)"/><rect x="-1.6" y="-6.2" width="3.2" height="3.4" transform="rotate(300)"/><circle r="4.3"/></g><circle r="1.5" fill="#a7a7a7"/></svg>

<!-- toolbar row 2 left -->
<div class="a" style="left:0;top:908px;width:314px;height:21px;background:#aaaaaa"></div>
<div class="a" style="left:14px;top:908px;width:1px;height:20px;background:#8e8e8e"></div>
<div class="a" style="left:15px;top:908px;width:34px;height:20px;background:#a3a3a3"></div>
<div class="a" style="left:49px;top:908px;width:1px;height:20px;background:#8e8e8e"></div>
<svg class="a" style="left:20px;top:912px" width="12" height="12" viewBox="0 0 12 12"><path d="M6 0v12M0 6h12" stroke="#2b2b2b" stroke-width="2"/></svg>
<svg class="a" style="left:37px;top:917px" width="6" height="4" viewBox="0 0 6 4"><path d="M0 0h6L3 4z" fill="#444"/></svg>
<div class="a" style="left:170px;top:909px;width:33px;height:19px;background:#bdbdbd"></div>
<svg class="a" style="left:176px;top:911px" width="16" height="14" viewBox="0 0 16 14"><path d="M15 0V13H0Z" fill="#8f8f8f"/></svg>
<div class="a" style="left:204px;top:908px;width:1px;height:20px;background:#8e8e8e"></div>
<div class="a" style="left:237px;top:908px;width:1px;height:20px;background:#8e8e8e"></div>
<div class="a" style="left:271px;top:908px;width:1px;height:20px;background:#8e8e8e"></div>
<div class="a" style="left:277px;top:908px;width:1px;height:20px;background:#8e8e8e"></div>
<div class="a" style="left:308px;top:908px;width:1px;height:20px;background:#8e8e8e"></div>
<svg class="a" style="left:213px;top:912px" width="16" height="12" viewBox="0 0 16 12"><rect x="0" y="2" width="4" height="8" fill="#7f7f7f"/><rect x="4" y="0" width="2" height="12" fill="#2a2a2a"/><path d="M8 5h4V2.5L15.5 6L12 9.5V7H8z" fill="#2a2a2a"/></svg>
<svg class="a" style="left:245px;top:912px" width="18" height="12" viewBox="0 0 18 12"><rect x="1" y="0" width="2" height="12" fill="#2a2a2a"/><rect x="15" y="0" width="2" height="12" fill="#2a2a2a"/><rect x="3" y="7" width="12" height="5" fill="#7f7f7f"/><path d="M7.5 0h3v3h2.5L9 7L5 3h2.5z" fill="#2a2a2a"/></svg>
<svg class="a" style="left:288px;top:912px" width="10" height="12" viewBox="0 0 10 12"><g fill="#2a2a2a"><rect x="1" y="0" width="8" height="2"/><path d="M3 2h4l1 4H2z"/><rect x="0" y="6" width="10" height="1.5"/><rect x="4.5" y="7.5" width="1" height="4.5"/></g></svg>

<div class="a" style="left:0;top:929px;width:314px;height:147px;background:#8b8b8b"></div>
<div class="a" style="left:0;top:929px;width:314px;height:3px;background:#858585"></div>
<div class="a" style="left:316px;top:908px;width:1106px;height:21px;background:#b2b2b2;border-bottom:1px solid #8e8e8e"></div>
<div class="a" style="left:326px;top:924px;width:395.8px;height:4px;background:#7189bd"></div>
<div class="a" style="left:316px;top:929px;width:1106px;height:147px;background:#878787"></div>
<div class="a" style="left:316px;top:929px;width:1106px;height:3px;background:#828282"></div>
<div class="a" style="left:324px;top:919px;width:1px;height:9px;background:#161616"></div>
<div class="t" style="left:327.4px;top:910.3px;font-size:10px;letter-spacing:-0.1px;color:#262626">0</div>
<div class="a" style="left:349px;top:922px;width:1px;height:6px;background:#161616"></div>
<div class="a" style="left:374px;top:919px;width:1px;height:9px;background:#161616"></div>
<div class="t" style="left:377.0px;top:910.3px;font-size:10px;letter-spacing:-0.1px;color:#262626">10</div>
<div class="a" style="left:399px;top:922px;width:1px;height:6px;background:#161616"></div>
<div class="a" style="left:424px;top:919px;width:1px;height:9px;background:#161616"></div>
<div class="t" style="left:426.6px;top:910.3px;font-size:10px;letter-spacing:-0.1px;color:#262626">20</div>
<div class="a" style="left:448px;top:922px;width:1px;height:6px;background:#161616"></div>
<div class="a" style="left:473px;top:919px;width:1px;height:9px;background:#161616"></div>
<div class="t" style="left:476.3px;top:910.3px;font-size:10px;letter-spacing:-0.1px;color:#262626">30</div>
<div class="a" style="left:498px;top:922px;width:1px;height:6px;background:#161616"></div>
<div class="a" style="left:523px;top:919px;width:1px;height:9px;background:#161616"></div>
<div class="t" style="left:525.9px;top:910.3px;font-size:10px;letter-spacing:-0.1px;color:#262626">40</div>
<div class="a" style="left:548px;top:922px;width:1px;height:6px;background:#161616"></div>
<div class="a" style="left:572px;top:919px;width:1px;height:9px;background:#161616"></div>
<div class="t" style="left:575.5px;top:910.3px;font-size:10px;letter-spacing:-0.1px;color:#262626">50</div>
<div class="a" style="left:597px;top:922px;width:1px;height:6px;background:#161616"></div>
<div class="a" style="left:622px;top:919px;width:1px;height:9px;background:#161616"></div>
<div class="t" style="left:625.1px;top:910.3px;font-size:10px;letter-spacing:-0.1px;color:#262626">60</div>
<div class="a" style="left:647px;top:922px;width:1px;height:6px;background:#161616"></div>
<div class="a" style="left:672px;top:919px;width:1px;height:9px;background:#161616"></div>
<div class="t" style="left:674.7px;top:910.3px;font-size:10px;letter-spacing:-0.1px;color:#262626">70</div>
<div class="a" style="left:696px;top:922px;width:1px;height:6px;background:#161616"></div>
<div class="a" style="left:721px;top:919px;width:1px;height:9px;background:#161616"></div>
<div class="t" style="left:724.4px;top:910.3px;font-size:10px;letter-spacing:-0.1px;color:#262626">80</div>
<div class="a" style="left:746px;top:922px;width:1px;height:6px;background:#161616"></div>
<div class="a" style="left:771px;top:919px;width:1px;height:9px;background:#161616"></div>
<div class="t" style="left:774.0px;top:910.3px;font-size:10px;letter-spacing:-0.1px;color:#262626">90</div>
<div class="a" style="left:796px;top:922px;width:1px;height:6px;background:#161616"></div>
<div class="a" style="left:820px;top:919px;width:1px;height:9px;background:#161616"></div>
<div class="t" style="left:823.6px;top:910.3px;font-size:10px;letter-spacing:-0.1px;color:#262626">100</div>
<div class="a" style="left:845px;top:922px;width:1px;height:6px;background:#161616"></div>
<div class="a" style="left:870px;top:919px;width:1px;height:9px;background:#161616"></div>
<div class="t" style="left:873.2px;top:910.3px;font-size:10px;letter-spacing:-0.1px;color:#262626">110</div>
<div class="a" style="left:895px;top:922px;width:1px;height:6px;background:#161616"></div>
<div class="a" style="left:920px;top:919px;width:1px;height:9px;background:#161616"></div>
<div class="t" style="left:922.8px;top:910.3px;font-size:10px;letter-spacing:-0.1px;color:#262626">120</div>
<div class="a" style="left:945px;top:922px;width:1px;height:6px;background:#161616"></div>
<div class="a" style="left:969px;top:919px;width:1px;height:9px;background:#161616"></div>
<div class="t" style="left:972.5px;top:910.3px;font-size:10px;letter-spacing:-0.1px;color:#262626">130</div>
<div class="a" style="left:994px;top:922px;width:1px;height:6px;background:#161616"></div>
<div class="a" style="left:1019px;top:919px;width:1px;height:9px;background:#161616"></div>
<div class="t" style="left:1022.1px;top:910.3px;font-size:10px;letter-spacing:-0.1px;color:#262626">140</div>
<div class="a" style="left:1044px;top:922px;width:1px;height:6px;background:#161616"></div>
<div class="a" style="left:1069px;top:919px;width:1px;height:9px;background:#161616"></div>
<div class="t" style="left:1071.7px;top:910.3px;font-size:10px;letter-spacing:-0.1px;color:#262626">150</div>
<div class="a" style="left:1093px;top:922px;width:1px;height:6px;background:#161616"></div>
<div class="a" style="left:1118px;top:919px;width:1px;height:9px;background:#161616"></div>
<div class="t" style="left:1121.3px;top:910.3px;font-size:10px;letter-spacing:-0.1px;color:#262626">160</div>
<div class="a" style="left:1143px;top:922px;width:1px;height:6px;background:#161616"></div>
<div class="a" style="left:1168px;top:919px;width:1px;height:9px;background:#161616"></div>
<div class="t" style="left:1170.9px;top:910.3px;font-size:10px;letter-spacing:-0.1px;color:#262626">170</div>
<div class="a" style="left:1193px;top:922px;width:1px;height:6px;background:#161616"></div>
<div class="a" style="left:1217px;top:919px;width:1px;height:9px;background:#161616"></div>
<div class="t" style="left:1220.6px;top:910.3px;font-size:10px;letter-spacing:-0.1px;color:#262626">180</div>
<div class="a" style="left:1242px;top:922px;width:1px;height:6px;background:#161616"></div>
<div class="a" style="left:1267px;top:919px;width:1px;height:9px;background:#161616"></div>
<div class="t" style="left:1270.2px;top:910.3px;font-size:10px;letter-spacing:-0.1px;color:#262626">190</div>
<div class="a" style="left:1292px;top:922px;width:1px;height:6px;background:#161616"></div>
<div class="a" style="left:1317px;top:919px;width:1px;height:9px;background:#161616"></div>
<div class="t" style="left:1319.8px;top:910.3px;font-size:10px;letter-spacing:-0.1px;color:#262626">200</div>
<div class="a" style="left:1342px;top:922px;width:1px;height:6px;background:#161616"></div>
<div class="a" style="left:1366px;top:919px;width:1px;height:9px;background:#161616"></div>
<div class="t" style="left:1369.4px;top:910.3px;font-size:10px;letter-spacing:-0.1px;color:#262626">210</div>
<div class="a" style="left:1391px;top:922px;width:1px;height:6px;background:#161616"></div>
<div class="a" style="left:1416px;top:919px;width:1px;height:9px;background:#161616"></div>
<div class="t" style="left:1419.0px;top:910.3px;font-size:10px;letter-spacing:-0.1px;color:#262626">220</div>
<div class="a" style="left:15px;top:936px;width:299px;height:32px;background:#a9a9a9"></div>
<div class="a" style="left:15px;top:936px;width:4px;height:32px;background:#2f70b9"></div>
<div class="a" style="left:36px;top:946px;width:165px;height:14px;background:#b7b7b7;border-radius:2px"></div>
<svg class="a" style="left:21px;top:947px" width="13" height="11" viewBox="0 0 13 11"><path d="M7.5 0L13 11H2Z" fill="#1f7a7e"/><path d="M0 4h4M0 6.5h3M0 9h2.5" stroke="#555" stroke-width="0.8"/></svg>
<svg class="a" style="left:38px;top:947px" width="12" height="12" viewBox="0 0 14 14"><g fill="none" stroke="#3c3c3c" stroke-width="1.1"><path d="M7 0.8L12.8 3.8V10.2L7 13.2L1.2 10.2V3.8Z"/><path d="M1.2 3.8L7 6.8L12.8 3.8M7 6.8V13.2"/></g></svg>
<div class="t" style="left:51px;top:947px">Player Character</div>
<svg class="a" style="left:187px;top:948px" width="11" height="11" viewBox="0 0 11 11"><circle cx="5.5" cy="5.5" r="4.6" fill="none" stroke="#3a3a3a" stroke-width="1.1"/><circle cx="5.5" cy="5.5" r="1.6" fill="#3a3a3a"/></svg>
<div class="a" style="left:202px;top:944px;width:1px;height:18px;background:#9a9a9a"></div>
<svg class="a" style="left:256px;top:944px" width="10" height="17" viewBox="0 0 10 17"><rect x="3" y="0" width="4" height="9" rx="2" fill="#555"/><path d="M1 8h8l-1.5 4L5 16 2.5 12z" fill="#b83333"/><path d="M3 12l2 4 2-4" fill="#333"/></svg>
<svg class="a" style="left:271px;top:945px" width="16" height="16" viewBox="0 0 16 16"><circle cx="8" cy="8" r="7.2" fill="#b9b9b9" stroke="#8a8a8a" stroke-width="1"/><circle cx="8" cy="8" r="5" fill="#cc3d3d"/></svg>
<svg class="a" style="left:298px;top:948px" width="3" height="11" viewBox="0 0 3 11"><g fill="#333"><rect x="0.5" y="0.5" width="2" height="2"/><rect x="0.5" y="4.5" width="2" height="2"/><rect x="0.5" y="8.5" width="2" height="2"/></g></svg>
<div class="a" style="left:15px;top:971px;width:299px;height:20px;background:#a9a9a9"></div>
<div class="a" style="left:15px;top:971px;width:4px;height:20px;background:#474747"></div>
<div class="a" style="left:36px;top:974px;width:165px;height:14px;background:#b7b7b7;border-radius:2px"></div>
<svg class="a" style="left:38px;top:975px" width="12" height="12" viewBox="0 0 14 14"><g fill="none" stroke="#3c3c3c" stroke-width="1.1"><path d="M7 0.8L12.8 3.8V10.2L7 13.2L1.2 10.2V3.8Z"/><path d="M1.2 3.8L7 6.8L12.8 3.8M7 6.8V13.2"/></g></svg>
<div class="t" style="left:51px;top:975px">Player Character</div>
<svg class="a" style="left:187px;top:975px" width="11" height="11" viewBox="0 0 11 11"><circle cx="5.5" cy="5.5" r="4.6" fill="none" stroke="#3a3a3a" stroke-width="1.1"/><circle cx="5.5" cy="5.5" r="1.6" fill="#3a3a3a"/></svg>
<div class="a" style="left:202px;top:972px;width:1px;height:18px;background:#9a9a9a"></div>
<svg class="a" style="left:275px;top:974px" width="10" height="13" viewBox="0 0 10 13"><g fill="#2a2a2a"><rect x="1.5" y="0" width="7" height="2"/><path d="M3 2h4l1 4H2z"/><rect x="0" y="6" width="10" height="1.5"/><rect x="4.5" y="7.5" width="1.2" height="5.5"/></g></svg>
<svg class="a" style="left:298px;top:975px" width="3" height="11" viewBox="0 0 3 11"><g fill="#333"><rect x="0.5" y="0.5" width="2" height="2"/><rect x="0.5" y="4.5" width="2" height="2"/><rect x="0.5" y="8.5" width="2" height="2"/></g></svg>
<div class="a" style="left:325px;top:936px;width:1097px;height:32px;background:#838383"></div>
<div class="a" style="left:325px;top:936px;width:396.8px;height:28px;background:linear-gradient(90deg,#8c8c8c,#9a9b9f 40%,#8a8b8e)"></div>
<svg class="a" style="left:325px;top:936px" width="396.8" height="28" viewBox="0 0 396.8 28" preserveAspectRatio="none"><path d="M0 28 Q 30 0 60 0 L 60 28 Z" fill="#9c9da1" opacity="0.6"/><path d="M202 0 Q 300 5 396.8 28 L 202 28 Z" fill="#9d9ea3" opacity="0.6"/></svg>
<div class="a" style="left:385px;top:937px;width:142px;height:27px;background:#7e8084"></div>
<div class="t" style="left:385px;top:946px;width:142px;text-align:center;font-size:10px;letter-spacing:0;color:#eee;text-shadow:1px 1px 0 #333">2H_Heavy Smash</div>
<div class="a" style="left:325px;top:964px;width:396.8px;height:4px;background:#1d5b95"></div>
<svg class="a" style="left:714.8px;top:949px" width="6" height="8" viewBox="0 0 6 8"><path d="M0 0v8L6 4z" fill="#eee"/></svg>
<svg class="a" style="left:732.8px;top:950px" width="12" height="6" viewBox="0 0 12 6"><path d="M6 3C4 0 1 0 1 3s3 3 5 0 5-3 5 0-3 3-5 0" fill="none" stroke="#707070" stroke-width="1.2"/></svg>
<div class="a" style="left:325px;top:968px;width:1097px;height:1px;background:#999"></div>
<div class="a" style="left:325px;top:969px;width:1097px;height:22px;background:#858585"></div>
<div class="a" style="left:550.5px;top:969px;width:6px;height:17px;background:linear-gradient(#c4c4c4,#a8a8a8);border-radius:2px"></div>
<div class="a" style="left:374px;top:932px;width:1px;height:144px;background:#000;opacity:0.07"></div>
<div class="a" style="left:424px;top:932px;width:1px;height:144px;background:#000;opacity:0.07"></div>
<div class="a" style="left:473px;top:932px;width:1px;height:144px;background:#000;opacity:0.07"></div>
<div class="a" style="left:523px;top:932px;width:1px;height:144px;background:#000;opacity:0.07"></div>
<div class="a" style="left:572px;top:932px;width:1px;height:144px;background:#000;opacity:0.07"></div>
<div class="a" style="left:622px;top:932px;width:1px;height:144px;background:#000;opacity:0.07"></div>
<div class="a" style="left:672px;top:932px;width:1px;height:144px;background:#000;opacity:0.07"></div>
<div class="a" style="left:721px;top:932px;width:1px;height:144px;background:#000;opacity:0.07"></div>
<div class="a" style="left:771px;top:932px;width:1px;height:144px;background:#000;opacity:0.07"></div>
<div class="a" style="left:820px;top:932px;width:1px;height:144px;background:#000;opacity:0.07"></div>
<div class="a" style="left:870px;top:932px;width:1px;height:144px;background:#000;opacity:0.07"></div>
<div class="a" style="left:920px;top:932px;width:1px;height:144px;background:#000;opacity:0.07"></div>
<div class="a" style="left:969px;top:932px;width:1px;height:144px;background:#000;opacity:0.07"></div>
<div class="a" style="left:1019px;top:932px;width:1px;height:144px;background:#000;opacity:0.07"></div>
<div class="a" style="left:1069px;top:932px;width:1px;height:144px;background:#000;opacity:0.07"></div>
<div class="a" style="left:1118px;top:932px;width:1px;height:144px;background:#000;opacity:0.07"></div>
<div class="a" style="left:1168px;top:932px;width:1px;height:144px;background:#000;opacity:0.07"></div>
<div class="a" style="left:1217px;top:932px;width:1px;height:144px;background:#000;opacity:0.07"></div>
<div class="a" style="left:1267px;top:932px;width:1px;height:144px;background:#000;opacity:0.07"></div>
<div class="a" style="left:1317px;top:932px;width:1px;height:144px;background:#000;opacity:0.07"></div>
<div class="a" style="left:1366px;top:932px;width:1px;height:144px;background:#000;opacity:0.07"></div>
<div class="a" style="left:1416px;top:932px;width:1px;height:144px;background:#000;opacity:0.07"></div>
<div class="a" style="left:721.3px;top:924px;width:1px;height:152px;background:#6c87c4"></div>
<div class="a" style="left:719.2px;top:910px;width:5px;height:14px;background:#2f56b0"></div>
<svg class="a" style="left:318px;top:908px" width="14" height="21" viewBox="0 0 14 21"><path d="M1 1.5Q1 0.5 2 0.5H12Q13 0.5 13 1.5V14L7 20.5L1 14Z" fill="#fff"/></svg>
<div class="a" style="left:324px;top:928px;width:1.4px;height:148px;background:#f4f4f4"></div>
<div class="a" style="left:314px;top:888px;width:2px;height:188px;background:#2c2c2c"></div>

</body></html>
